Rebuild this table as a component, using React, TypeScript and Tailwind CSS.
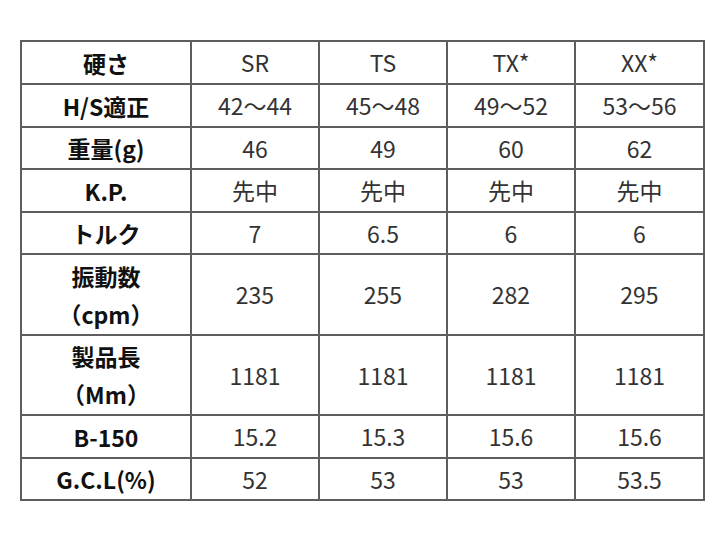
import React from "react";

const rows: any[] = [
  { label: "硬さ", values: ["SR", "TS", "TX*", "XX*"], h: 43 },
  { label: "H/S適正", values: ["42～44", "45～48", "49～52", "53～56"], h: 43 },
  { label: "重量(g)", values: ["46", "49", "60", "62"], h: 42 },
  { label: "K.P.", values: ["先中", "先中", "先中", "先中"], h: 43 },
  { label: "トルク", values: ["7", "6.5", "6", "6"], h: 42 },
  { label: ["振動数", "（cpm）"], values: ["235", "255", "282", "295"], h: 81 },
  { label: ["製品長", "（Mm）"], values: ["1181", "1181", "1181", "1181"], h: 80 },
  { label: "B-150", values: ["15.2", "15.3", "15.6", "15.6"], h: 43 },
  { label: "G.C.L(%)", values: ["52", "53", "53", "53.5"], h: 42 },
];

export default function App() {
  return (
    <div
      className="w-[720px] h-[540px] bg-white pt-[40px] pl-[20px]"
      style={{ fontFamily: '"Noto Sans CJK JP", "Noto Sans", sans-serif' }}
    >
      <table className="border-collapse border-2 border-[#5e5e5e] table-fixed w-[683px]">
        <colgroup>
          <col className="w-[170px]" />
          <col className="w-[128px]" />
          <col className="w-[128px]" />
          <col className="w-[128px]" />
          <col className="w-[129px]" />
        </colgroup>
        <tbody>
          {rows.map((r: any, i: number) => (
            <tr key={i} style={{ height: r.h }}>
              <td className="border-2 border-[#5e5e5e] text-center align-middle p-0 font-bold text-[23px] text-[#111] leading-[38px]">
                {Array.isArray(r.label) ? (
                  <div className="flex flex-col items-center">
                    <span>{r.label[0]}</span>
                    <span>{r.label[1]}</span>
                  </div>
                ) : (
                  r.label
                )}
              </td>
              {r.values.map((v: string, j: number) => (
                <td
                  key={j}
                  className="border-2 border-[#5e5e5e] text-center align-middle p-0 text-[23px] text-[#333] leading-none"
                >
                  {v}
                </td>
              ))}
            </tr>
          ))}
        </tbody>
      </table>
    </div>
  );
}
